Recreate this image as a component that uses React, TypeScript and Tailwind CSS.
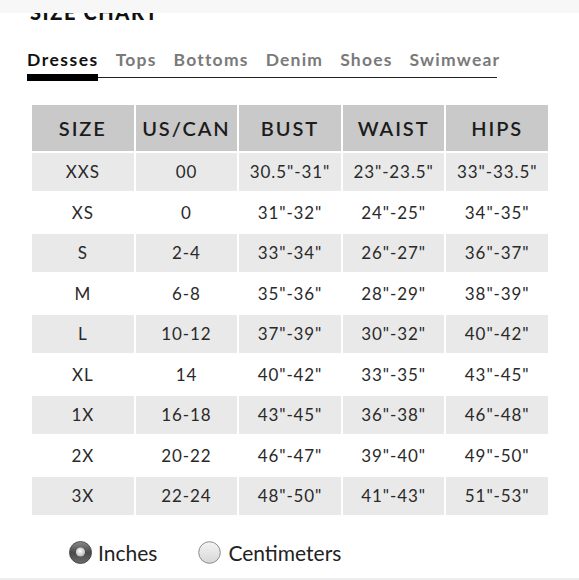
import { useState } from 'react';

const tabs = ['Dresses', 'Tops', 'Bottoms', 'Denim', 'Shoes', 'Swimwear'];

const headers = ['SIZE', 'US/CAN', 'BUST', 'WAIST', 'HIPS'];

const rows = [
  ['XXS', '00', '30.5"-31"', '23"-23.5"', '33"-33.5"'],
  ['XS', '0', '31"-32"', '24"-25"', '34"-35"'],
  ['S', '2-4', '33"-34"', '26"-27"', '36"-37"'],
  ['M', '6-8', '35"-36"', '28"-29"', '38"-39"'],
  ['L', '10-12', '37"-39"', '30"-32"', '40"-42"'],
  ['XL', '14', '40"-42"', '33"-35"', '43"-45"'],
  ['1X', '16-18', '43"-45"', '36"-38"', '46"-48"'],
  ['2X', '20-22', '46"-47"', '39"-40"', '49"-50"'],
  ['3X', '22-24', '48"-50"', '41"-43"', '51"-53"'],
];

function Radio({ checked }: { checked: boolean }) {
  // glossy iOS-style radio
  return (
    <svg width="23" height="23" viewBox="0 0 23 23">
      <defs>
        <linearGradient id="on" x1="0" y1="0" x2="0" y2="1">
          <stop offset="0" stopColor="#8a8a8a" />
          <stop offset="0.5" stopColor="#4a4a4a" />
          <stop offset="1" stopColor="#6a6a6a" />
        </linearGradient>
        <radialGradient id="dot" cx="0.45" cy="0.4" r="0.6">
          <stop offset="0" stopColor="#ffffff" />
          <stop offset="1" stopColor="#b5b5b5" />
        </radialGradient>
        <linearGradient id="off" x1="0" y1="0" x2="0" y2="1">
          <stop offset="0" stopColor="#f4f4f4" />
          <stop offset="1" stopColor="#d6d6d6" />
        </linearGradient>
      </defs>
      {checked ? (
        <>
          <circle cx="11.5" cy="11.5" r="11" fill="url(#on)" stroke="#3c3c3c" strokeWidth="0.8" />
          <circle cx="11.5" cy="11" r="4.6" fill="url(#dot)" />
        </>
      ) : (
        <circle cx="11.5" cy="11.5" r="10.8" fill="url(#off)" stroke="#8c8c8c" strokeWidth="1" />
      )}
    </svg>
  );
}

export default function App() {
  const [unit, setUnit] = useState<'in' | 'cm'>('in');

  return (
    <div className="relative w-[579px] h-[580px] overflow-hidden bg-white font-['Lato',_sans-serif] text-[#222]">
      {/* header bar covering the title */}
      <div className="h-[13px] bg-[#f7f7f7]" />
      <div className="h-[8px] overflow-hidden pl-[30px]">
        <div className="-mt-[11px] text-[20px] leading-none font-black tracking-[1.6px] text-[#111]">SIZE CHART</div>
      </div>

      {/* tabs */}
      <div className="ml-[27px] mt-[30px] w-[470px]">
        <div className="flex gap-[17px] text-[17.5px] font-bold tracking-[1.2px] leading-none whitespace-nowrap">
          {tabs.map((t, i) => (
            <span key={t} className={i === 0 ? 'text-[#111] tracking-[1.5px]' : 'text-[#7a7a7a]'}>
              {t}
            </span>
          ))}
        </div>
        <div className="relative mt-[5px] h-[7px]">
          <div className="absolute left-0 right-0 top-[3px] h-[1.5px] bg-[#222]" />
          <div className="absolute left-0 top-0 h-[7px] w-[71px] bg-black" />
        </div>
      </div>

      {/* size table */}
      <div className="ml-[32px] mt-[24px] w-[516px] flex flex-col gap-[2px]">
        <div className="grid grid-cols-5 gap-[2px] h-[46px]">
          {headers.map((h) => (
            <div key={h} className="flex items-center justify-center bg-[#c9c9c9] text-[20px] font-semibold tracking-[1.9px] text-[#1c1c1c]">
              {h}
            </div>
          ))}
        </div>
        {rows.map((r, i) => (
          <div key={r[0]} className="grid grid-cols-5 gap-[2px] h-[38.5px]">
            {r.map((c, j) => (
              <div
                key={j}
                className={`flex items-center justify-center text-[17px] tracking-[0.9px] text-[#2a2a2a] ${i % 2 === 0 ? 'bg-[#e9e9e9]' : 'bg-white'}`}
              >
                {c}
              </div>
            ))}
          </div>
        ))}
      </div>

      {/* units */}
      <div className="ml-[69px] mt-[22px] flex items-center text-[21px] text-[#222]">
        <button className="flex items-center gap-[6px]" onClick={() => setUnit('in')}>
          <Radio checked={unit === 'in'} />
          <span>Inches</span>
        </button>
        <button className="ml-[41px] flex items-center gap-[7px]" onClick={() => setUnit('cm')}>
          <Radio checked={unit === 'cm'} />
          <span>Centimeters</span>
        </button>
      </div>

      <div className="absolute bottom-0 left-0 right-0 h-[2px] bg-[#eeeeee]" />
    </div>
  );
}
